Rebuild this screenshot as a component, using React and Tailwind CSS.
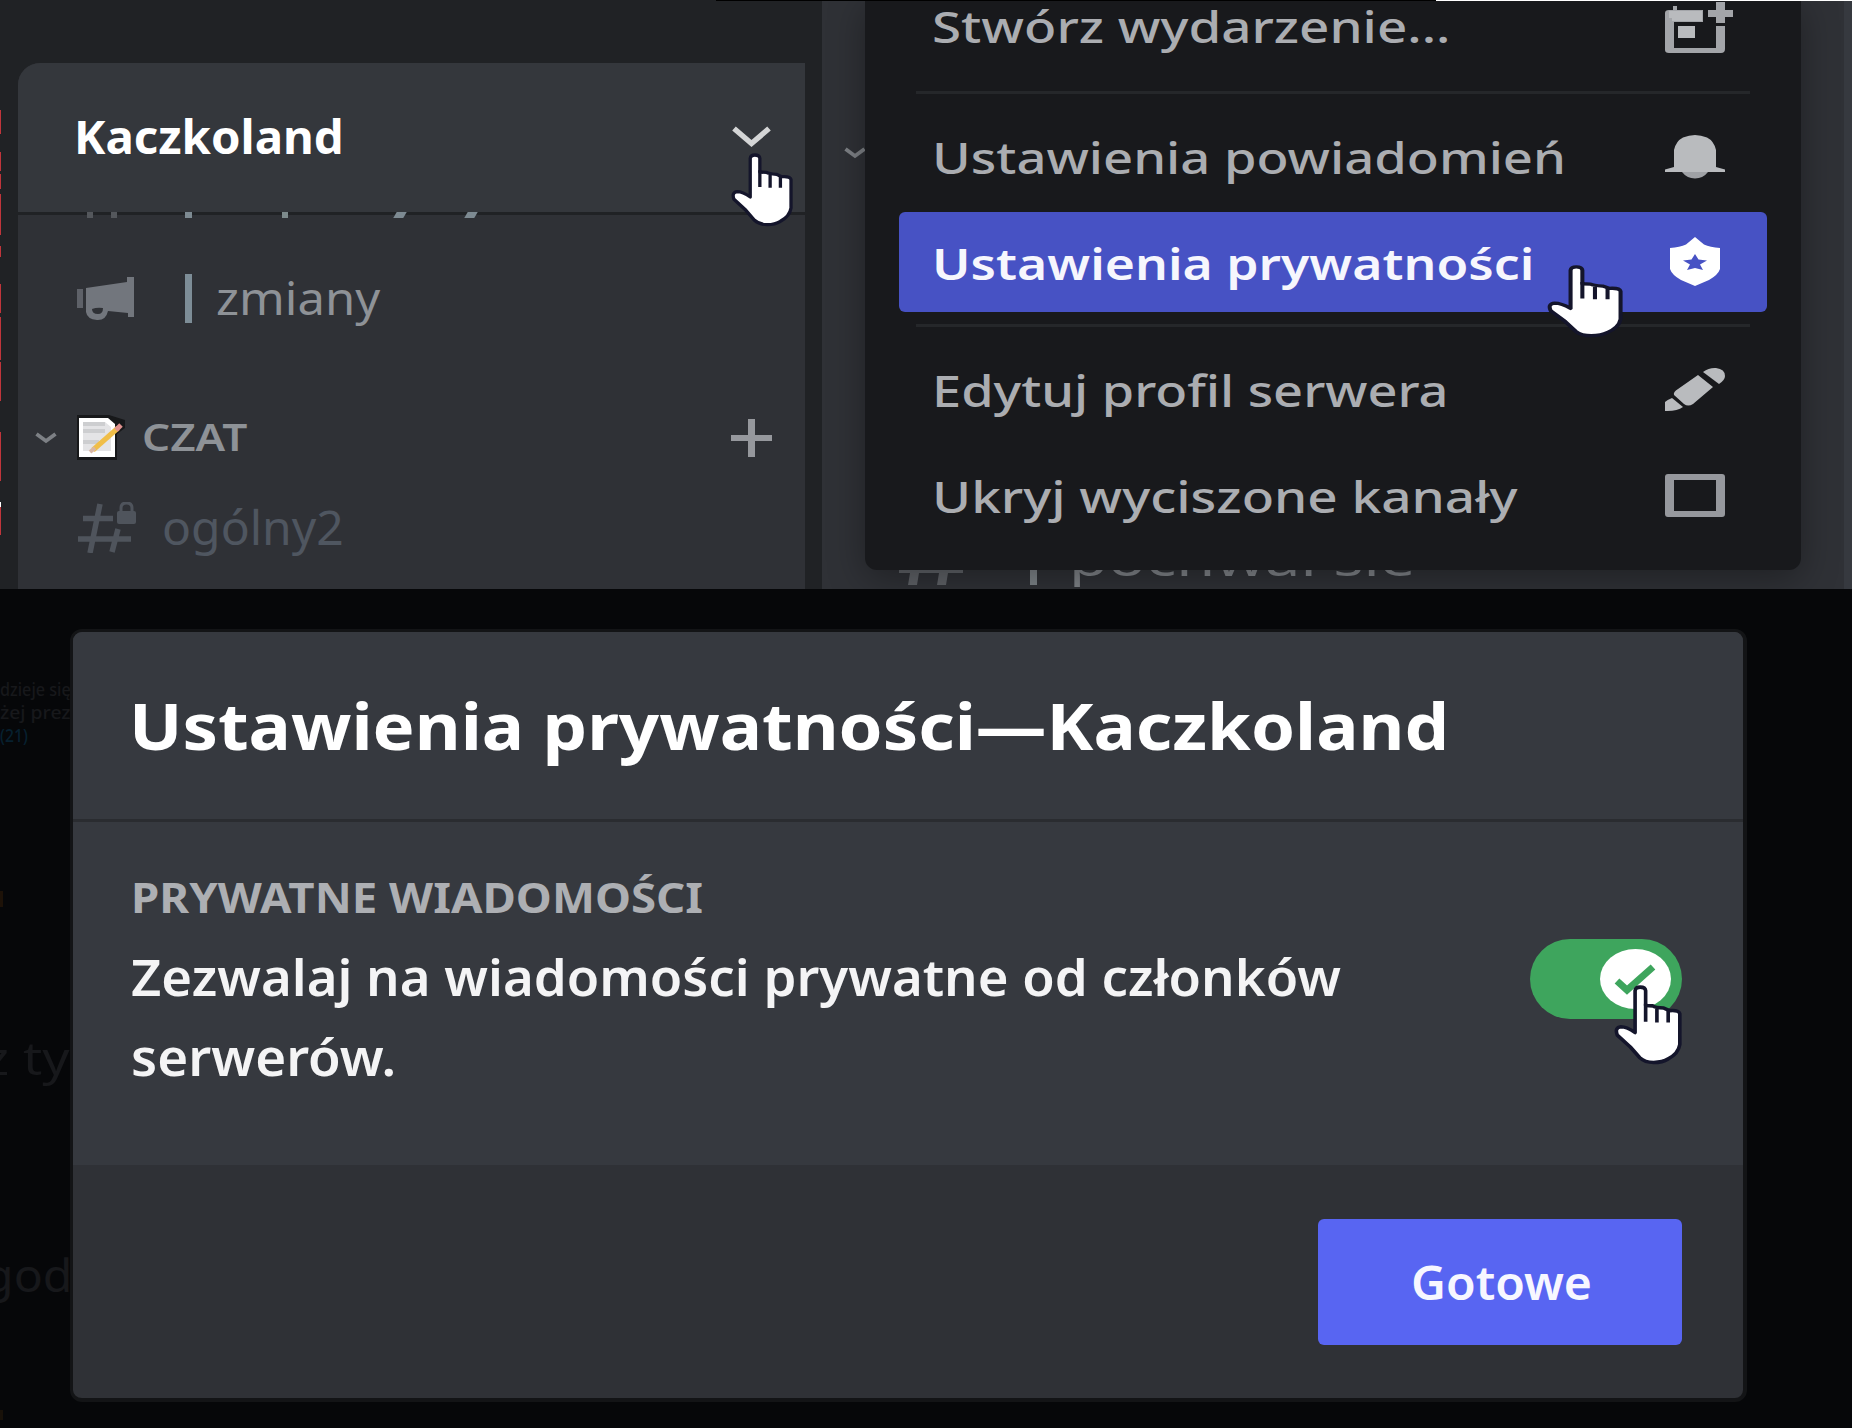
import React, { useLayoutEffect, useRef, useState } from "react";

/* A single line of text stretched horizontally to the given width. */
function Fit({ w, className = "", children }) {
  const ref = useRef(null);
  const [k, setK] = useState(1);
  useLayoutEffect(() => {
    setK(w / ref.current.offsetWidth);
  }, [w]);
  return (
    <span className={"block shrink-0 " + className} style={{ width: w }}>
      <span ref={ref} className="inline-block origin-left whitespace-nowrap align-top" style={{ transform: `scaleX(${k})` }}>
        {children}
      </span>
    </span>
  );
}

function Hand({ className }) {
  return (
    <svg viewBox="693 460 187 222" preserveAspectRatio="none" className={className}>
      <path
        d="M751 592V476Q752 466 765 466Q779 466 780 476V517L800 518Q806 523 830 524L846 531Q872 529 874 540V625Q870 650 842 665Q826 675 802 675Q778 675 764 662L738 632L702 599Q694 578 712 576Q728 576 751 592Z"
        fill="#fff"
        stroke="#14152b"
        strokeWidth="10"
        strokeLinejoin="round"
      />
      <path d="M780 512V562M811 526V564M842 530V564" stroke="#14152b" strokeWidth="10" />
    </svg>
  );
}

function SmallChevron({ className }) {
  return (
    <svg viewBox="0 0 22 13" className={className} fill="none" stroke="#7d8085" strokeWidth="3.800">
      <path d="M1.5 2L11 9L20.500 2" />
    </svg>
  );
}

const calendar = (
  <g>
    <path d="M6 15Q6 12 10 12H14V8H18V12H44V24H15V50H57V28H66V51Q66 55 62 55H10Q6 55 6 52Z" fill="#a3a5a9" />
    <path d="M10 13H43V23H13V20H10Z" fill="#b9bbbe" />
    <path d="M19 28H36V40H19Z" fill="#b9bbbe" />
    <path d="M57 4H66V12H74V19H66V25H57V19H49V12H57Z" fill="#a3a5a9" />
  </g>
);
const bell = (
  <g fill="#b9bbbe">
    <path d="M15 38V21Q17 12 24 8.500Q30 6 36 6Q42 6 48 8.500Q55 12 57 21V38L66 40.500V43H6V40.500Z" />
    <path d="M23 43H49Q44 49.500 36 49.500Q28 49.500 23 43Z" fill="#9fa1a5" />
  </g>
);
const shield = (
  <path
    fill="#fff"
    fillRule="evenodd"
    d="M36 2L45 9.500Q51 12 61 13V34Q59 40 50 45L36 51L22 45Q13 40 11 34V13Q21 12 27 9.500ZM36 19L32.500 24.500L24 25.500L31 29.500L28 35L36 33L44 35L41 29.500L48 25.500L39.500 24.500Z"
  />
);
const pencil = (
  <g fill="#b9bbbe">
    <path d="M44 10Q50 5.500 57 6Q66 7 66 14Q66 18 60 22Z" />
    <path d="M39 13L54 25L34 42Q29 45 25 42L15 33Q14 30 19 27Z" />
    <path d="M13 36L24 45Q18 49.500 6 49V40Q8 38 13 36Z" />
  </g>
);
const box = (
  <path
    fill="#96989d"
    fillRule="evenodd"
    d="M9 6H63Q66 6 66 9V46Q66 49 63 49H9Q6 49 6 46V9Q6 6 9 6ZM15 12V43H57V12Z"
  />
);

function MenuItem({ w, label, icon, active }) {
  return (
    <div
      className={
        "flex h-[100px] shrink-0 items-center justify-between rounded-md pl-[33px] pr-[36px] text-[43px] leading-[100px] " +
        (active ? "bg-[#4752c4] font-semibold text-[#f6f6fd]" : "font-medium text-[#abadb1]")
      }
    >
      <Fit w={w} className="pt-[3px]">{label}</Fit>
      <svg viewBox="0 0 72 54" className="h-[54px] w-[72px] overflow-visible">
        {icon}
      </svg>
    </div>
  );
}

const Separator = ({ className }) => <div className={"mx-[17px] h-[3px] shrink-0 bg-[#25272a] " + className} />;

const redMarks = [
  [110, 24], [152, 19], [174, 15], [194, 41], [246, 11], [284, 29], [317, 43], [362, 39], [432, 49], [507, 28],
];

function ServerPanel() {
  return (
    <section className="relative h-[589px] w-[822px] shrink-0 overflow-hidden bg-[#202225] pl-[18px] pt-[63px]">
      {redMarks.map(([y, h]) => (
        <div key={y} className="absolute left-0 w-px bg-[#c0353b]" style={{ top: y, height: h }} />
      ))}
      <div className="absolute left-0 top-[502px] h-[5px] w-px bg-white" />
      <div className="absolute right-0 top-0 h-px w-[106px] bg-black" />
      <div className="h-[526px] w-[787px] rounded-tl-[22px] bg-[#2f3136]">
        <header className="flex h-[149px] items-center justify-between rounded-tl-[22px] bg-[#34373c] pl-[56px] pr-[33px]">
          <Fit w={270} className="pb-0.5 text-[47px] font-bold text-white">Kaczkoland</Fit>
          <svg viewBox="0 0 41 22" className="mb-0.5 h-[22px] w-[41px]" fill="none" stroke="#d4d5d6" strokeWidth="5.500">
            <path d="M3 2.500L20.500 17.500L38 2.500" />
          </svg>
        </header>
        <div className="relative h-[3px] bg-[#202225]">
          <span className="absolute left-[69px] top-0 h-1.5 w-1.5 bg-[#54575c]" />
          <span className="absolute left-[93px] top-0 h-1.5 w-1.5 bg-[#54575c]" />
          <span className="absolute left-[167px] top-0 h-1.5 w-[7px] bg-[#7d8a92]" />
          <span className="absolute left-[264px] top-0 h-1.5 w-[6px] bg-[#7d8a8c]" />
          <span className="absolute left-[377px] top-0 h-1.5 w-[10px] -skew-x-[30deg] bg-[#7d8a92]" />
          <span className="absolute left-[448px] top-0 h-1.5 w-[10px] -skew-x-[30deg] bg-[#7d8a92]" />
        </div>
        <div className="mt-[41px] flex h-20 items-center pl-[59px] text-[46px] leading-[80px] text-[#8e9297]">
          <svg viewBox="0 0 57 43" className="mt-1 h-[43px] w-[57px] shrink-0" fill="#72767d">
            <path d="M0 12H6V31H0Z" opacity=".7" />
            <path
              fillRule="evenodd"
              d="M9 11L50 5V0H57V40H51V36L31 34Q29 43 21 43H20Q10 42 9 35ZM15 32Q15 37 21 37Q26 37 26 31Q20 30 15 32Z"
            />
          </svg>
          <span className="ml-[51px] mt-1 h-[49px] w-[7px] bg-[#7d8d97]" />
          <Fit w={164} className="ml-6 pt-0.5">zmiany</Fit>
        </div>
        <div className="mt-[69px] flex h-[60px] items-center pl-[17px] pr-[33px] text-[37px] font-semibold leading-[60px] text-[#8e9297]">
          <SmallChevron className="mt-1.5 h-[13px] w-[22px] shrink-0" />
          <svg viewBox="0 0 48 46" className="ml-5 mt-1 h-[46px] w-[48px] shrink-0">
            <path d="M0 1H32L48 6V14L40 20V46H0Z" fill="#17181a" />
            <path d="M2 4H31L38 10V43H2Z" fill="#fff" />
            <path d="M6 8H28L34 13V37H6Z" fill="#e4e4e6" />
            <path d="M6 10H28M6 17H28M6 28H22" stroke="#cdced0" strokeWidth="4" />
            <path d="M16 36L41 14" stroke="#f0be48" strokeWidth="5" />
            <path d="M39 16L44 11" stroke="#e0908e" strokeWidth="5" />
            <path d="M13 38L18 34" stroke="#d9b7a4" strokeWidth="4" />
          </svg>
          <Fit w={105} className="ml-[17px] pt-[3px]">CZAT</Fit>
          <svg viewBox="0 0 41 38" className="ml-auto mt-1.5 h-[38px] w-[41px]" fill="#96989d">
            <path d="M17 0H24V16H41V22H24V38H17V22H0V16H17Z" />
          </svg>
        </div>
        <div className="mt-5 flex h-20 items-center pl-[60px] text-[47px] leading-[80px] text-[#4f5660]">
          <svg viewBox="0 0 59 51" className="mt-1 h-[51px] w-[59px] shrink-0" fill="none" stroke="#4f545c" strokeWidth="5.500">
            <path d="M5 16.500H35M0 37H53M22 2L12 51M40 27L34 50" />
            <path d="M43 10V6Q43 1 48.500 1Q54 1 54 6V10" strokeWidth="3" />
            <rect x="39" y="9" width="19" height="13" rx="2" fill="#4f545c" stroke="none" />
          </svg>
          <Fit w={182} className="ml-[25px] pt-[3px]">ogólny2</Fit>
        </div>
      </div>
      <Hand className="absolute left-[731px] top-[153px] h-[74px] w-[62px]" />
    </section>
  );
}

function MenuPanel() {
  return (
    <section className="relative h-[589px] w-[1030px] overflow-hidden bg-[#2f3136]">
      <SmallChevron className="absolute left-[20px] top-[147px] h-[13px] w-[26px]" />
      <svg viewBox="0 0 68 16" className="absolute left-[73px] top-[569px] h-[16px] w-[68px]" fill="#5f6267">
        <path d="M4 0H68V4H53L51 16H42L44 4H24L22 16H13L15 4H4Z" />
      </svg>
      <div className="absolute left-[208px] top-[518px] flex text-[46px] leading-[80px] text-[#7f8388]">
        <span className="mt-[18px] h-[49px] w-[7px] bg-[#7d8388]" />
        <Fit w={346} className="ml-8">pochwal sie</Fit>
      </div>
      <div className="absolute right-0 top-0 h-full w-2 bg-[#36393f]" />
      <div className="relative ml-[43px] flex h-[570px] w-[936px] flex-col justify-end rounded-b-[12px] bg-[#18191c] pb-[25px] pl-[34px] pr-[34px] shadow-[0_8px_36px_rgba(0,0,0,0.34)]">
        <MenuItem w={518} label="Stwórz wydarzenie..." icon={calendar} />
        <Separator className="mb-3 mt-4" />
        <MenuItem w={634} label="Ustawienia powiadomień" icon={bell} />
        <div className="h-1.5 shrink-0" />
        <MenuItem w={602} label="Ustawienia prywatności" icon={shield} active />
        <Separator className="my-3" />
        <MenuItem w={517} label="Edytuj profil serwera" icon={pencil} />
        <div className="h-1.5 shrink-0" />
        <MenuItem w={586} label="Ukryj wyciszone kanały" icon={box} />
      </div>
      <div className="absolute left-0 top-0 h-px w-full bg-black" />
      <div className="absolute right-0 top-0 h-px w-[416px] bg-white" />
      <Hand className="absolute left-[725px] top-[265px] h-[73px] w-[76px]" />
    </section>
  );
}

function Backdrop() {
  return (
    <div className="absolute left-0 top-0 h-full w-[70px] overflow-hidden text-[#17181b]">
      <div className="absolute left-0 top-[89px] text-[18px] font-medium leading-[23px]">
        <Fit w={71}>dzieje się</Fit>
        <Fit w={71}>żej prez</Fit>
        <Fit w={28} className="text-[#07202f]">(21)</Fit>
      </div>
      <div className="absolute left-0 top-[302px] h-4 w-[3px] bg-[#1d1208]" />
      <Fit w={86} className="absolute -left-4 top-[428px] text-[46px] leading-[80px]">z ty</Fit>
      <Fit w={88} className="absolute -left-4 top-[645px] text-[46px] leading-[80px]">god</Fit>
      <div className="absolute left-0 top-[821px] h-2.5 w-[3px] bg-[#181109]" />
    </div>
  );
}

function PrivacyModal() {
  return (
    <section className="relative h-[839px] w-full overflow-hidden bg-[#060709] pl-[70px] pt-[40px]">
      <Backdrop />
      <div className="relative h-[773px] w-[1677px] overflow-hidden rounded-[12px] border-[3px] border-r-4 border-b-4 border-[#131416] bg-[#2f3136]">
        <header className="flex h-[187px] items-center bg-[#36393f] pb-0.5 pl-[56px]">
          <Fit w={1320} className="text-[65px] font-bold leading-[90px] text-white">Ustawienia prywatności—Kaczkoland</Fit>
        </header>
        <div className="h-[3px] bg-[#2a2c30]" />
        <div className="relative flex h-[343px] justify-between bg-[#36393f] pl-[58px] pr-[61px]">
          <div className="pt-[50px]">
            <Fit w={572} className="text-[42px] font-bold leading-[50px] text-[#adafb3]">PRYWATNE WIADOMOŚCI</Fit>
            <div className="mt-[15px] text-[50px] font-semibold leading-[80px] text-[#f4f4f5]">
              <Fit w={1210}>Zezwalaj na wiadomości prywatne od członków</Fit>
              <Fit w={265}>serwerów.</Fit>
            </div>
          </div>
          <div className="mt-[117px] h-20 w-[152px] shrink-0 rounded-full bg-[#3ea55d] pl-[70px] pt-2.5">
            <svg viewBox="0 0 71 60" className="h-[60px] w-[71px]">
              <ellipse cx="35.500" cy="30" rx="35.500" ry="30" fill="#fff" />
              <path d="M17 32L27 41L53 18" fill="none" stroke="#3ea55d" strokeWidth="7" />
            </svg>
          </div>
          <Hand className="absolute left-[1541px] top-[163px] h-[80px] w-[68px]" />
        </div>
        <footer className="flex h-[233px] justify-end pr-[61px] pt-[54px]">
          <button className="flex h-[126px] w-[364px] rounded-md bg-[#5865f2] pl-[89px] text-[46px] font-semibold leading-[126px] text-[#f7f7ff]">
            <Fit w={181}>Gotowe</Fit>
          </button>
        </footer>
      </div>
    </section>
  );
}

export default function App() {
  return (
    <main className="h-[1428px] w-[1852px] overflow-hidden bg-[#060709] font-['Noto_Sans',sans-serif]">
      <div className="flex">
        <ServerPanel />
        <MenuPanel />
      </div>
      <PrivacyModal />
    </main>
  );
}
